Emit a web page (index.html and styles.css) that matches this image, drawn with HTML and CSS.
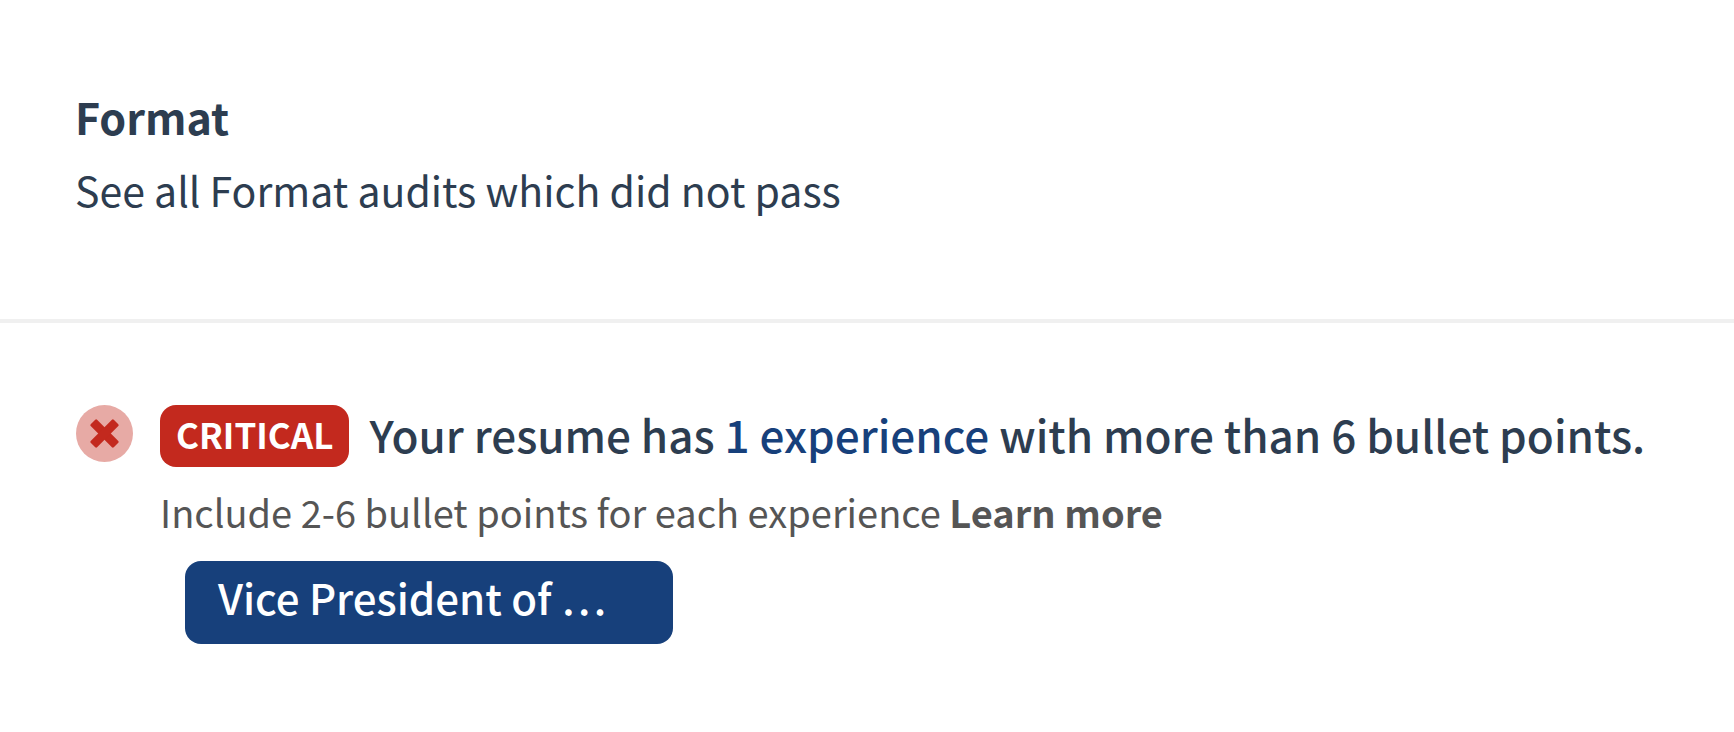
FILE: index.html
```html
<!doctype html>
<html lang="en">
<head>
  <meta charset="utf-8" />
  <meta name="viewport" content="width=device-width,initial-scale=1" />
  <title>Format audits</title>
  <link rel="stylesheet" href="styles.css">
</head>
<body>
  <header class="section-header">
    <h1>Format</h1>
    <p>See all Format audits which did not pass</p>
  </header>

  <main class="audit">
    <svg class="audit-icon" viewBox="0 0 57 57" role="img" aria-label="Failed">
      <circle cx="28.5" cy="28.5" r="28.5" fill="#e7aaa5"/>
      <g fill="#c3291e">
        <rect x="12.2" y="24" width="32.6" height="9" rx="1.3" transform="rotate(45 28.5 28.5)"/>
        <rect x="12.2" y="24" width="32.6" height="9" rx="1.3" transform="rotate(-45 28.5 28.5)"/>
      </g>
    </svg>
    <div class="audit-body">
      <div class="audit-title">
        <span class="badge">CRITICAL</span>
        <h2>Your resume has <a href="#experience">1 experience</a> with more than 6 bullet points.</h2>
      </div>
      <p class="audit-hint">Include 2-6 bullet points for each experience <a href="#learn-more">Learn more</a></p>
      <button type="button" class="pill" id="experience">Vice President of …</button>
    </div>
  </main>
</body>
</html>
```

FILE: styles.css
```css
:root {
  --text: #2d3d50;
  --muted: #555;
  --blue: #17407b;
  --red: #c3291e;
  font-family: "Noto Sans CJK KR", "Noto Sans", sans-serif;
}
* { box-sizing:border-box; }
body { margin:0; background:#fff; color:var(--text); }
h1, h2, p { margin:0; }
a { color:inherit; text-decoration:none; }
a:hover { text-decoration:underline; }

/* Section header */
.section-header {
  padding:84px 75px 98px;
  border-bottom:4px solid #f0f0f0;
}
.section-header h1 { font-size:43px; line-height:64px; font-weight:700; margin-bottom:9px; }
.section-header p { font-size:41px; line-height:64px; }

/* Audit row */
.audit { display:flex; gap:27px; padding:82px 76px; }
.audit-icon { width:57px; height:57px; flex:none; }
.audit-body { flex:1; min-width:0; }
.audit-title { display:flex; align-items:flex-start; gap:20px; }
.audit-title h2 { font-size:44px; line-height:58px; font-weight:500; }
.audit-title a { color:var(--blue); }
.badge {
  flex:none; padding:0 16px 4px; border-radius:16px;
  background:var(--red); color:#fff;
  font-size:35px; line-height:58px; font-weight:700;
}
.audit-hint { margin-top:17px; font-size:38px; line-height:56px; color:var(--muted); }
.audit-hint a { font-weight:700; }
.pill {
  display:block; margin:21px 0 0 25px; padding:0 67px 11px 33px;
  border:none; border-radius:16px; background:var(--blue); color:#fff;
  font-family:inherit; font-size:42px; line-height:72px; font-weight:500;
  cursor:pointer;
}
.pill:hover { opacity:0.9; }
```
